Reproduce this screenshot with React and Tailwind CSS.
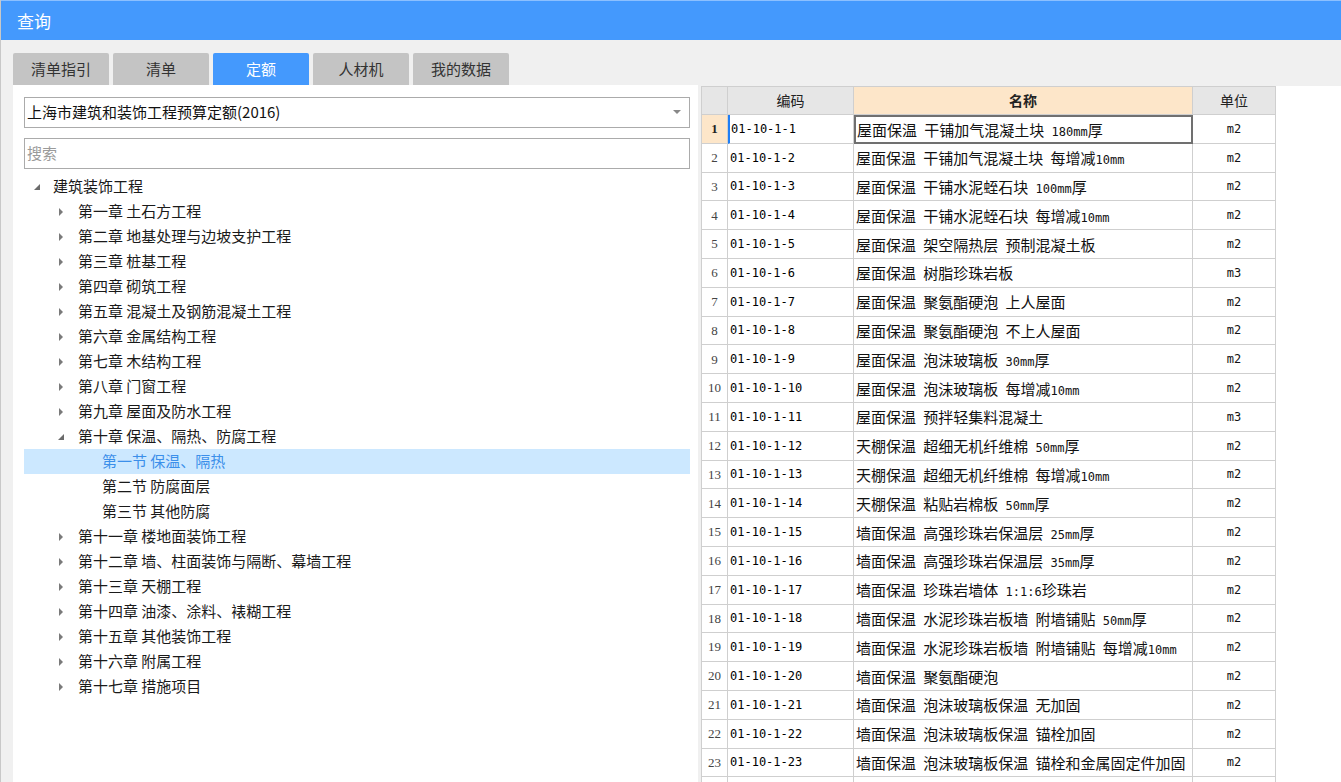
import React from "react";

const tabs = ["清单指引", "清单", "定额", "人材机", "我的数据"];

const tree = [
  { t: "建筑装饰工程", lvl: 0, exp: true },
  { t: "第一章 土石方工程", lvl: 1 },
  { t: "第二章 地基处理与边坡支护工程", lvl: 1 },
  { t: "第三章 桩基工程", lvl: 1 },
  { t: "第四章 砌筑工程", lvl: 1 },
  { t: "第五章 混凝土及钢筋混凝土工程", lvl: 1 },
  { t: "第六章 金属结构工程", lvl: 1 },
  { t: "第七章 木结构工程", lvl: 1 },
  { t: "第八章 门窗工程", lvl: 1 },
  { t: "第九章 屋面及防水工程", lvl: 1 },
  { t: "第十章 保温、隔热、防腐工程", lvl: 1, exp: true },
  { t: "第一节 保温、隔热", lvl: 2, sel: true },
  { t: "第二节 防腐面层", lvl: 2 },
  { t: "第三节 其他防腐", lvl: 2 },
  { t: "第十一章 楼地面装饰工程", lvl: 1 },
  { t: "第十二章 墙、柱面装饰与隔断、幕墙工程", lvl: 1 },
  { t: "第十三章 天棚工程", lvl: 1 },
  { t: "第十四章 油漆、涂料、裱糊工程", lvl: 1 },
  { t: "第十五章 其他装饰工程", lvl: 1 },
  { t: "第十六章 附属工程", lvl: 1 },
  { t: "第十七章 措施项目", lvl: 1 },
];

const rows = [
  ["屋面保温 干铺加气混凝土块 180mm厚", "m2"],
  ["屋面保温 干铺加气混凝土块 每增减10mm", "m2"],
  ["屋面保温 干铺水泥蛭石块 100mm厚", "m2"],
  ["屋面保温 干铺水泥蛭石块 每增减10mm", "m2"],
  ["屋面保温 架空隔热层 预制混凝土板", "m2"],
  ["屋面保温 树脂珍珠岩板", "m3"],
  ["屋面保温 聚氨酯硬泡 上人屋面", "m2"],
  ["屋面保温 聚氨酯硬泡 不上人屋面", "m2"],
  ["屋面保温 泡沫玻璃板 30mm厚", "m2"],
  ["屋面保温 泡沫玻璃板 每增减10mm", "m2"],
  ["屋面保温 预拌轻集料混凝土", "m3"],
  ["天棚保温 超细无机纤维棉 50mm厚", "m2"],
  ["天棚保温 超细无机纤维棉 每增减10mm", "m2"],
  ["天棚保温 粘贴岩棉板 50mm厚", "m2"],
  ["墙面保温 高强珍珠岩保温层 25mm厚", "m2"],
  ["墙面保温 高强珍珠岩保温层 35mm厚", "m2"],
  ["墙面保温 珍珠岩墙体 1:1:6珍珠岩", "m2"],
  ["墙面保温 水泥珍珠岩板墙 附墙铺贴 50mm厚", "m2"],
  ["墙面保温 水泥珍珠岩板墙 附墙铺贴 每增减10mm", "m2"],
  ["墙面保温 聚氨酯硬泡", "m2"],
  ["墙面保温 泡沫玻璃板保温 无加固", "m2"],
  ["墙面保温 泡沫玻璃板保温 锚栓加固", "m2"],
  ["墙面保温 泡沫玻璃板保温 锚栓和金属固定件加固", "m2"],
  ["", ""],
];

const ui = { fontFamily: '"Noto Sans CJK SC", "Noto Sans", sans-serif' };
const mono = { fontFamily: '"DejaVu Sans Mono", "Liberation Mono", monospace' };

function Mixed({ text }) {
  const parts = text.match(/[\x00-\x7f]+|[^\x00-\x7f]+/g) || [];
  return (
    <span className="whitespace-pre leading-none">
      {parts.map((p, i) =>
        /^[\x00-\x7f]+$/.test(p) ? (
          <span key={i} className="text-[12px]" style={mono}>
            {p}
          </span>
        ) : (
          <span key={i} className="text-[15px]" style={ui}>
            {p}
          </span>
        )
      )}
    </span>
  );
}

function Caret({ exp }) {
  if (exp)
    return (
      <svg width="8" height="8" viewBox="0 0 8 8" className="block">
        <polygon points="7,1 7,7 1,7" fill="#6b6b6b" />
      </svg>
    );
  return (
    <svg width="6" height="10" viewBox="0 0 6 10" className="block">
      <polygon points="1,1 5,5 1,9" fill="#7a7a7a" />
    </svg>
  );
}

export default function App() {
  return (
    <div
      className="w-[1341px] h-[782px] overflow-hidden flex flex-col bg-[#f0f0f0] border-l border-[#c8c8c8]"
      style={ui}
    >
      {/* Title bar */}
      <div className="h-[40px] shrink-0 bg-[#4499fd] border-t border-[#8cc0ff] flex items-center pl-[16px]">
        <span className="text-white text-[17px] leading-none">查询</span>
      </div>

      {/* Tabs */}
      <div className="flex gap-[4px] pl-[12px] pt-[13px] shrink-0">
        {tabs.map((t) => (
          <div
            key={t}
            className={
              "w-[96px] h-[32px] rounded-t-[2px] flex items-center justify-center text-[15px] " +
              (t === "定额" ? "bg-[#4499fd] text-white" : "bg-[#c4c4c4] text-[#333]")
            }
          >
            {t}
          </div>
        ))}
      </div>

      {/* Body */}
      <div className="flex flex-1 min-h-0">
        {/* Left panel */}
        <div className="ml-[12px] w-[685px] bg-white flex flex-col pl-[11px] pr-[8px] pt-[12px]">
          <div className="h-[31px] border border-[#ababab] flex items-center pl-[2px] pr-[8px] text-[15px] text-[#111]">
            <span className="flex-1">上海市建筑和装饰工程预算定额(2016)</span>
            <svg width="8" height="5" viewBox="0 0 8 5">
              <polygon points="0,0 8,0 4,4" fill="#888" />
            </svg>
          </div>
          <div className="mt-[10px] h-[31px] border border-[#ababab] flex items-center pl-[2px] text-[15px] text-[#9a9a9a]">
            搜索
          </div>
          <div className="mt-[5px] flex flex-col">
            {tree.map((n, i) => (
              <div
                key={i}
                className={
                  "h-[25px] flex items-center text-[15px] " +
                  (n.sel ? "bg-[#cce8ff] text-[#3b8fea]" : "text-[#1a1a1a]")
                }
              >
                <div
                  className={
                    n.lvl === 0 ? "w-[29px]" : n.lvl === 1 ? "w-[54px]" : "w-[78px]"
                  }
                >
                  {n.lvl === 0 && (
                    <div className="pl-[9px]">
                      <Caret exp />
                    </div>
                  )}
                  {n.lvl === 1 && (
                    <div className={n.exp ? "pl-[33px]" : "pl-[34px]"}>
                      <Caret exp={n.exp} />
                    </div>
                  )}
                </div>
                <span>{n.t}</span>
              </div>
            ))}
          </div>
        </div>

        {/* Right panel */}
        <div className="ml-[3px] flex-1 bg-white mt-[1px] min-w-0">
          <div className="w-[575px] border-l border-t border-[#cfcfcf]">
            {/* header */}
            <div className="flex h-[28px] text-[14px] text-[#222]">
              <div className="w-[26px] bg-[#e6e6e6] border-r border-b border-[#cfcfcf]" />
              <div className="w-[126px] bg-[#e6e6e6] border-r border-b border-[#cfcfcf] flex items-center justify-center">
                编码
              </div>
              <div className="w-[339px] bg-[#fde6c9] border-r border-b border-[#cfcfcf] flex items-center justify-center font-bold">
                名称
              </div>
              <div className="w-[83px] bg-[#e6e6e6] border-r border-b border-[#cfcfcf] flex items-center justify-center">
                单位
              </div>
            </div>
            {rows.map((r, i) => {
              const first = i === 0;
              const empty = r[0] === "";
              return (
                <div key={i} className="flex h-[28.8px] text-[#111]">
                  <div
                    className={
                      "w-[26px] border-r border-b border-[#cfcfcf] flex items-center justify-center text-[13px] " +
                      (first ? "bg-[#fde6c9] font-bold text-[#222]" : "text-[#444]")
                    }
                    style={{ fontFamily: '"Liberation Serif", serif' }}
                  >
                    {empty ? "" : i + 1}
                  </div>
                  <div
                    className={
                      "w-[126px] border-r border-b border-[#cfcfcf] flex items-center text-[12px] text-black " +
                      (first ? "border-l-2 border-l-[#1f7ef5] pl-[1px]" : "pl-[2px]")
                    }
                    style={mono}
                  >
                    {empty ? "" : "01-10-1-" + (i + 1)}
                  </div>
                  <div
                    className={
                      "w-[339px] flex items-center whitespace-nowrap overflow-hidden " +
                      (first
                        ? "border-2 border-[#707070] pl-[1px]"
                        : "border-r border-b border-[#cfcfcf] pl-[2px]")
                    }
                  >
                    <Mixed text={r[0]} />
                  </div>
                  <div
                    className="w-[83px] border-r border-b border-[#cfcfcf] flex items-center justify-center text-[12px]"
                    style={mono}
                  >
                    {r[1]}
                  </div>
                </div>
              );
            })}
          </div>
        </div>
      </div>
    </div>
  );
}
